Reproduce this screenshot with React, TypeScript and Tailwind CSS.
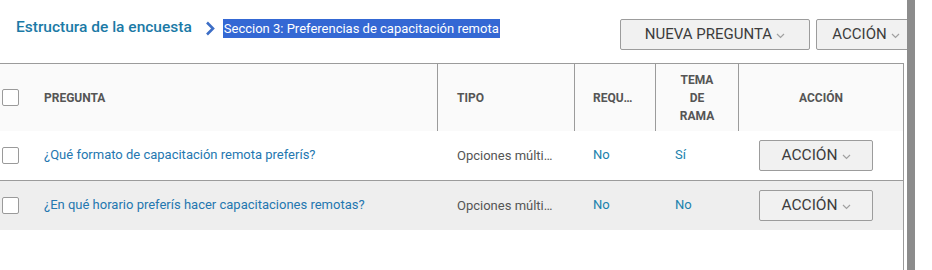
import React from "react";

interface Question {
  id: number;
  text: string;
  type: string;
  required: string;
  branch: string;
  shaded: boolean;
}

const questions: Question[] = [
  {
    id: 1,
    text: "¿Qué formato de capacitación remota preferís?",
    type: "Opciones múlti…",
    required: "No",
    branch: "Sí",
    shaded: false,
  },
  {
    id: 2,
    text: "¿En qué horario preferís hacer capacitaciones remotas?",
    type: "Opciones múlti…",
    required: "No",
    branch: "No",
    shaded: true,
  },
];

// Small caret used in the dropdown buttons
const Caret: React.FC = () => (
  <svg width="9" height="6" viewBox="0 0 9 6" className="ml-1 mt-[2px]">
    <polyline points="1,1 4.5,4.5 8,1" fill="none" stroke="#a0a0a0" strokeWidth="1.2" />
  </svg>
);

const Checkbox: React.FC = () => (
  <span className="block h-[17px] w-[17px] rounded-[2px] border border-[#9a9a9a] bg-white" />
);

const DropButton: React.FC<{ label: string; className?: string }> = ({ label, className }) => (
  <button
    className={`flex shrink-0 items-center justify-center rounded-[2px] border border-[#9c9c9c] bg-[#f1f1f1] text-[#3c3c3c] ${className ?? ""}`}
  >
    {label}
    <Caret />
  </button>
);

const App: React.FC = () => {
  return (
    <div className="flex h-[270px] w-[932px] overflow-hidden bg-white font-['Roboto',sans-serif]">
      <div className="flex w-[907px] shrink-0 flex-col overflow-hidden">
        {/* top bar */}
        <div className="flex h-[63px] shrink-0">
          <div className="flex h-[56px] items-center pl-4">
            <span className="text-[15.5px] font-medium text-[#1b7aa6]">Estructura de la encuesta</span>
            <svg width="10" height="15" viewBox="0 0 10 15" className="ml-[13px] mr-[8px]">
              <polyline points="2,1.5 8,7.5 2,13.5" fill="none" stroke="#3d6ec6" strokeWidth="2.6" />
            </svg>
            <span className="bg-[#3468d4] px-px text-[13px] leading-[19px] text-white">
              Seccion 3: Preferencias de capacitación remota
            </span>
          </div>
          <div className="ml-auto flex gap-[6px] pt-[19px]">
            <DropButton label="NUEVA PREGUNTA" className="h-[31px] w-[190px] text-[15px]" />
            <DropButton label="ACCIÓN" className="-mr-[9px] h-[31px] w-[100px] text-[15px]" />
          </div>
        </div>

        {/* table */}
        <div className="flex w-[904px] flex-1 flex-col border-t border-r border-[#9b9b9b]">
          <div className="grid h-[67px] grid-cols-[438px_137px_81px_83px_164px] bg-[#fafafa] text-[12px] font-bold text-[#555]">
            <div className="flex items-center border-r border-[#9b9b9b] pl-[2px]">
              <Checkbox />
              <span className="ml-[25px]">PREGUNTA</span>
            </div>
            <div className="flex items-center border-r border-[#9b9b9b] pl-[19px]">TIPO</div>
            <div className="flex items-center border-r border-[#9b9b9b] pl-[18px]">REQU…</div>
            <div className="flex items-center justify-center border-r border-[#9b9b9b] text-center leading-[18px]">
              TEMA
              <br />
              DE
              <br />
              RAMA
            </div>
            <div className="flex items-center justify-center">ACCIÓN</div>
          </div>

          {questions.map((q, i) => (
            <div
              key={q.id}
              className={`grid h-[49px] grid-cols-[438px_137px_81px_83px_164px] items-center text-[13px] ${
                q.shaded ? "bg-[#eeeeee]" : "bg-white"
              } ${i < questions.length - 1 ? "box-content border-b border-[#9b9b9b]" : ""}`}
            >
              <div className="flex items-center pl-[2px]">
                <Checkbox />
                <span className="ml-[25px] -mt-[2px] text-[#2477b0]">{q.text}</span>
              </div>
              <div className="pl-[19px] text-[#555]">{q.type}</div>
              <div className="-mt-[2px] pl-[18px] text-[#1a82ad]">{q.required}</div>
              <div className="-mt-[2px] pl-[19px] text-[#1a82ad]">{q.branch}</div>
              <div className="flex pl-[20px]">
                <DropButton label="ACCIÓN" className="h-[31px] w-[114px] text-[15.5px]" />
              </div>
            </div>
          ))}
        </div>
      </div>

      {/* scrollbar strip */}
      <div className="h-full w-[8px] shrink-0 bg-[#8c8c8c]" />
      <div className="flex-1 bg-white" />
    </div>
  );
};

export default App;
